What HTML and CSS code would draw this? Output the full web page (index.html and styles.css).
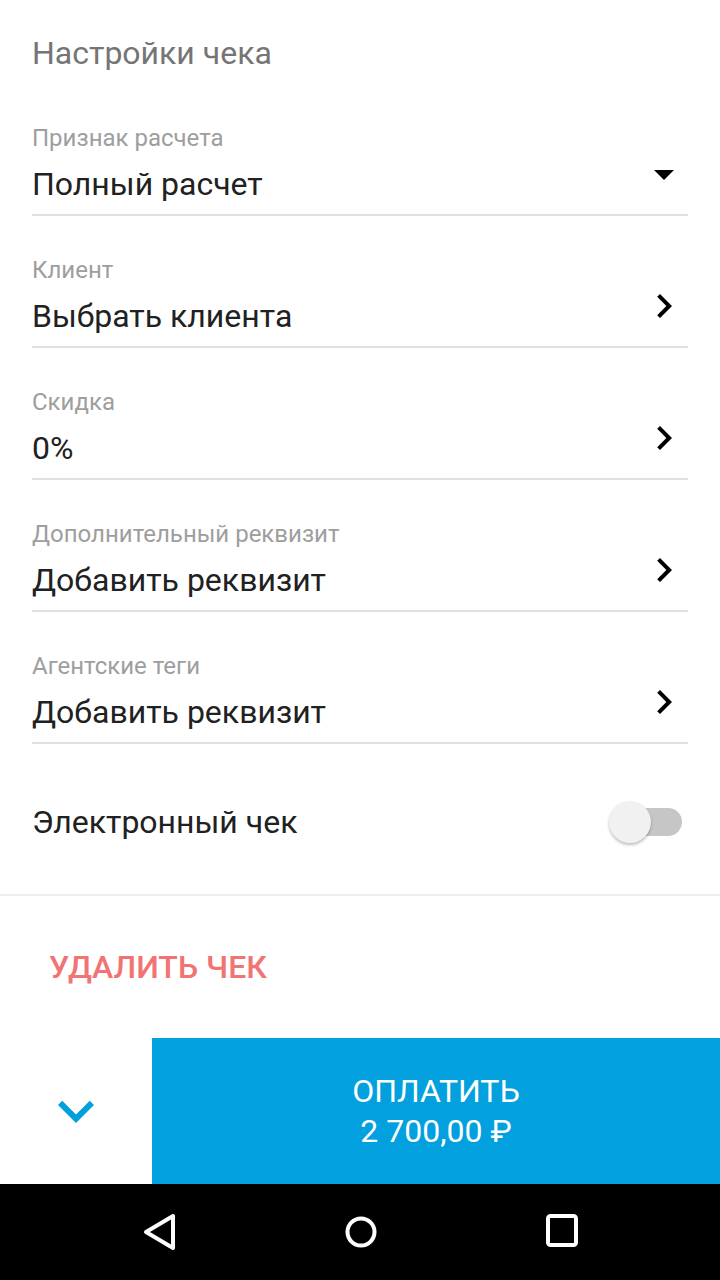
FILE: index.html
```html
<!DOCTYPE html>
<html lang="ru">
<head>
    <meta charset="UTF-8">
    <title>Настройки чека</title>
    <link rel="stylesheet" href="styles.css">
</head>
<body>
    <div class="screen">
        <main class="settings">
            <h1 class="title">Настройки чека</h1>

            <div class="field">
                <div class="field-label">Признак расчета</div>
                <div class="field-row">
                    <span class="field-value">Полный расчет</span>
                    <svg class="field-icon" viewBox="0 0 24 24"><path d="M7 10l5 5 5-5z"/></svg>
                </div>
            </div>

            <div class="field">
                <div class="field-label">Клиент</div>
                <div class="field-row">
                    <span class="field-value">Выбрать клиента</span>
                    <svg class="field-icon" viewBox="0 0 24 24"><path d="M10 6L8.59 7.41 13.17 12l-4.58 4.59L10 18l6-6z"/></svg>
                </div>
            </div>

            <div class="field">
                <div class="field-label">Скидка</div>
                <div class="field-row">
                    <span class="field-value">0%</span>
                    <svg class="field-icon" viewBox="0 0 24 24"><path d="M10 6L8.59 7.41 13.17 12l-4.58 4.59L10 18l6-6z"/></svg>
                </div>
            </div>

            <div class="field">
                <div class="field-label">Дополнительный реквизит</div>
                <div class="field-row">
                    <span class="field-value">Добавить реквизит</span>
                    <svg class="field-icon" viewBox="0 0 24 24"><path d="M10 6L8.59 7.41 13.17 12l-4.58 4.59L10 18l6-6z"/></svg>
                </div>
            </div>

            <div class="field">
                <div class="field-label">Агентские теги</div>
                <div class="field-row">
                    <span class="field-value">Добавить реквизит</span>
                    <svg class="field-icon" viewBox="0 0 24 24"><path d="M10 6L8.59 7.41 13.17 12l-4.58 4.59L10 18l6-6z"/></svg>
                </div>
            </div>

            <div class="switch-row">
                <span class="switch-text">Электронный чек</span>
                <span class="switch"><span class="switch-thumb"></span></span>
            </div>
        </main>

        <div class="delete">УДАЛИТЬ ЧЕК</div>

        <div class="pay-bar">
            <div class="collapse">
                <svg class="collapse-icon" viewBox="0 0 24 24"><path d="M16.59 8.59L12 13.17 7.41 8.59 6 10l6 6 6-6z"/></svg>
            </div>
            <div class="pay">ОПЛАТИТЬ<br>2 700,00 ₽</div>
        </div>

        <nav class="nav">
            <svg class="nav-icon" viewBox="0 0 48 48"><polygon points="37,8 37,40 10,24"/></svg>
            <svg class="nav-icon" viewBox="0 0 48 48"><circle cx="24" cy="24" r="13.5"/></svg>
            <svg class="nav-icon" viewBox="0 0 48 48"><rect x="10" y="8" width="28" height="29" rx="2.5"/></svg>
        </nav>
    </div>
</body>
</html>
```

FILE: styles.css
```css
body {
    margin: 0;
    font-family: Roboto, "Liberation Sans", sans-serif;
    background: #fff;
}
.screen {
    width: 720px;
    height: 1280px;
    display: flex;
    flex-direction: column;
    overflow: hidden;
}
.settings {
    padding: 0 32px;
}
.title {
    margin: 0;
    padding: 35px 0 13px;
    font-size: 32px;
    line-height: 36px;
    font-weight: 400;
    color: #757575;
}
.field {
    padding: 42px 0 10px;
    border-bottom: 2px solid #e0e0e0;
}
.field-label {
    font-size: 24px;
    line-height: 24px;
    color: #9e9e9e;
}
.field-row {
    display: flex;
    justify-content: space-between;
    align-items: flex-start;
    margin-top: 14px;
    height: 40px;
}
.field-value {
    font-size: 32px;
    line-height: 40px;
    color: #212121;
}
.field-icon {
    width: 48px;
    height: 48px;
    margin-top: -14px;
    fill: #000;
}
.switch-row {
    height: 144px;
    padding-top: 6px;
    display: flex;
    align-items: center;
    justify-content: space-between;
}
.switch-text {
    font-size: 32px;
    color: #212121;
}
.switch {
    position: relative;
    width: 68px;
    height: 28px;
    margin-right: 6px;
    border-radius: 14px;
    background: #c6c6c6;
}
.switch-thumb {
    position: absolute;
    left: -5px;
    top: -7px;
    width: 42px;
    height: 42px;
    border-radius: 50%;
    background: #f1f1f1;
    box-shadow: 0 2px 3px rgba(0,0,0,0.25);
}
.delete {
    height: 142px;
    border-top: 2px solid #eeeeee;
    display: flex;
    align-items: center;
    padding-left: 49px;
    font-size: 32px;
    font-weight: 500;
    color: #f27373;
}
.pay-bar {
    height: 146px;
    display: flex;
}
.collapse {
    width: 152px;
    display: flex;
    align-items: center;
    justify-content: center;
}
.collapse-icon {
    width: 72px;
    height: 72px;
    fill: #029fdd;
}
.pay {
    flex: 1;
    display: flex;
    flex-direction: column;
    align-items: center;
    justify-content: center;
    background: #02a0de;
    color: #fff;
    font-size: 32px;
    line-height: 40px;
    text-align: center;
}
.nav {
    height: 96px;
    background: #000;
    display: flex;
    align-items: center;
    padding-left: 136px;
    gap: 153px;
}
.nav-icon {
    width: 48px;
    height: 48px;
    fill: none;
    stroke: #fff;
    stroke-width: 4;
    stroke-linejoin: round;
}
```
